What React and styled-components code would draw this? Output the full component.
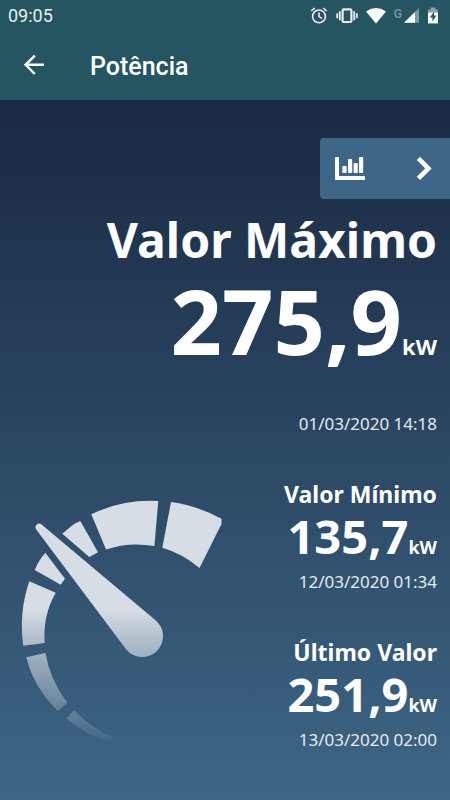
import React from "react";
import styled, { createGlobalStyle } from "styled-components";

const GlobalStyle = createGlobalStyle`
    * {
        box-sizing: border-box;
    }

    body {
        margin: 0;
        background-color: #3d6686;
    }
`;

const Page = styled.div`
    min-height: 100vh;
    display: flex;
    flex-direction: column;
    color: #fff;
    font-family: "Noto Sans", sans-serif;
`;

const Header = styled.header`
    background-color: #265562;
    font-family: Roboto, sans-serif;
`;

const StatusBar = styled.div`
    display: flex;
    align-items: center;
    justify-content: space-between;
    height: 32px;
    padding: 0 11px 0 8px;
    color: #e9eef0;
    font-size: 18px;
    line-height: 24px;
`;

const StatusIcons = styled.div`
    display: flex;
    align-items: center;
    gap: 8px;

    svg {
        display: block;
    }
`;

const AppBar = styled.div`
    display: flex;
    align-items: center;
    gap: 44px;
    height: 68px;
    padding: 0 22px;
`;

const BackButton = styled.button`
    width: 24px;
    height: 24px;
    padding: 0;
    border: none;
    background: none;
    color: inherit;
    cursor: pointer;

    svg {
        display: block;
    }
`;

const PageTitle = styled.h1`
    margin: 0;
    padding-top: 2px;
    font-size: 25px;
    line-height: 34px;
    font-weight: 500;
`;

const Content = styled.main`
    flex: 1;
    display: flex;
    flex-direction: column;
    padding: 38px 0 40px;
    background: linear-gradient(#192941, #3d6686);
`;

const ChartButton = styled.button`
    align-self: flex-end;
    display: flex;
    align-items: center;
    justify-content: space-between;
    width: 130px;
    height: 61px;
    margin-bottom: 11px;
    padding: 0 18px 0 14px;
    border: none;
    border-radius: 4px 0 0 4px;
    background-color: #3e6787;
    color: inherit;
    cursor: pointer;
`;

const Details = styled.div`
    display: flex;
    justify-content: space-between;
    margin-top: 43px;
    padding-left: 10px;
`;

const GaugeDrawing = styled.svg`
    flex: none;
    width: 220px;
    height: 260px;
    margin-top: 10px;
`;

const ReadingList = styled.div`
    display: flex;
    flex-direction: column;
    gap: 43px;
`;

const ReadingBox = styled.section`
    display: flex;
    flex-direction: column;
    align-items: flex-end;
    padding-right: 13px;
`;

const ReadingTitle = styled.h2`
    margin: 0;
    font-size: ${props => props.$large ? "48px" : "23px"};
    line-height: ${props => props.$large ? "60px" : "30px"};
    font-weight: 700;
    white-space: nowrap;
`;

const ReadingValue = styled.p`
    display: flex;
    align-items: baseline;
    margin: ${props => props.$large ? "0" : "3px 0 0"};
    font-size: ${props => props.$large ? "90px" : "47px"};
    line-height: ${props => props.$large ? "100px" : "48px"};
    font-weight: 700;
`;

const Unit = styled.span`
    font-size: ${props => props.$large ? "22px" : "18px"};
    line-height: 24px;
`;

const ReadingDate = styled.time`
    margin-top: ${props => props.$large ? "42px" : "10px"};
    color: #e6ebef;
    font-size: 17px;
    line-height: 24px;
    white-space: nowrap;
`;

const AlarmIcon = () => (
    <svg width="18" height="18" viewBox="0 0 18 18" fill="none" stroke="currentColor" strokeWidth="1.6">
        <circle cx="9" cy="9.4" r="6.4" />
        <path d="M9 5.4v4.2l3 1.8M1.2 4l3.6-3M16.8 4l-3.6-3" />
    </svg>
);

const VibrateIcon = () => (
    <svg width="22" height="16" viewBox="0 0 22 16" fill="none" stroke="currentColor" strokeWidth="1.8">
        <rect x="6.6" y="1.4" width="8.8" height="12.6" rx="1" strokeWidth="2.2" />
        <path d="M3.8 3.2v9M1.2 5.2v5M18.2 3.2v9M20.8 5.2v5" />
    </svg>
);

const WifiIcon = () => (
    <svg width="20" height="16" viewBox="0 0 20 16" fill="#fff">
        <path d="M0 3.4Q10 -3.4 20 3.4L10 15.4Z" />
    </svg>
);

const NetworkType = styled.span`
    align-self: flex-start;
    margin-right: -6px;
    color: #789ba4;
    font-size: 12px;
    line-height: 14px;
    font-weight: 500;
`;

const SignalIcon = () => (
    <svg width="15" height="16" viewBox="0 0 15 16">
        <path d="M15 0v14.8H0Z" fill="#7d99a1" />
        <path d="M11 3.9V14.8H0Z" fill="#fff" />
    </svg>
);

const BatteryIcon = () => (
    <svg width="12" height="18" viewBox="0 0 12 18">
        <path d="M1 2.4h2.8V.6h4.4v1.8H11v4H1Z" fill="#8aa3aa" />
        <path d="M1 5.6h10v10.8H1Z" fill="#fff" />
        <path d="M7 4.8 2.8 10.6H5.4v4L9.4 8.6H7Z" fill="#265562" />
    </svg>
);

const BackIcon = () => (
    <svg width="24" height="24" viewBox="0 0 24 24" fill="none" stroke="currentColor" strokeWidth="2.4">
        <path d="M22 10.8H4M12.8 1.6 3.6 10.8l9.2 9.2" />
    </svg>
);

const ChartIcon = () => (
    <svg width="32" height="26" viewBox="0 0 32 26" fill="currentColor">
        <rect x="1" y="1" width="4" height="23" rx="1" />
        <rect x="1" y="20" width="30" height="4" rx="1" />
        <rect x="8.4" y="10" width="4.2" height="7" rx="1" />
        <rect x="14" y="3" width="4.2" height="14" rx="1" />
        <rect x="19.6" y="7" width="4.2" height="10" rx="1" />
        <rect x="25" y="1" width="4.2" height="16" rx="1" />
    </svg>
);

const ChevronIcon = () => (
    <svg width="16" height="26" viewBox="0 0 16 26" fill="none" stroke="currentColor" strokeWidth="4.6">
        <path d="M2.4 2.4 12.4 12.4l-10 10" />
    </svg>
);

const Gauge = () => (
    <GaugeDrawing viewBox="0 0 220 260" aria-hidden="true">
        <defs>
            <linearGradient id="gaugeFade" gradientUnits="userSpaceOnUse" x1="0" y1="0" x2="0" y2="260">
                <stop offset="0" stopColor="#d6dde4" />
                <stop offset="0.46" stopColor="#d6dde4" />
                <stop offset="1" stopColor="#d6dde4" stopOpacity="0" />
            </linearGradient>
        </defs>
        <g fill="url(#gaugeFade)">
            {/* dial */}
            <path d="M161 13Q187 16.5 211.5 29.8V35L189.5 79Q172.5 64.5 152.3 58.7Z" />
            <path d="M81.3 25.3Q113 10 148.3 12L144.4 57Q119 52.5 96 60.5Z" />
            <path d="M52.3 44.7 60 38.2Q65 34 70.3 32L88 63.3 79.3 68Z" />
            <path d="M35.3 63.7 55 89.7 50.7 95.7 24.7 81Q28.5 71.5 35.3 63.7Z" />
            <path d="M19.3 92.3 45.7 103.7Q32.5 127 34.7 154L13.3 156.7Q8.5 124 19.3 92.3Z" />
            <path d="M16.3 168.3 35.5 164Q39.5 190 57.3 213.5L47.7 222Q23.5 198 16.3 168.3Z" />
            <path d="M64.3 221.3Q81 239 103.5 248.5L100.5 253Q75 246 56.3 229.3Z" />
            {/* needle */}
            <path d="M26 40.3A3.8 3.8 0 0 1 31 35L145.5 131.2A20.8 20.8 0 1 1 115.3 159.3Z" />
        </g>
    </GaugeDrawing>
);

const Reading = ({ title, value, unit, date, large }) => (
    <ReadingBox>
        <ReadingTitle $large={large}>{title}</ReadingTitle>
        <ReadingValue $large={large}>
            {value}
            <Unit $large={large}>{unit}</Unit>
        </ReadingValue>
        <ReadingDate $large={large}>{date}</ReadingDate>
    </ReadingBox>
);

const App = () => {
    return (
        <Page>
            <GlobalStyle />
            <Header>
                <StatusBar>
                    <span>09:05</span>
                    <StatusIcons>
                        <AlarmIcon />
                        <VibrateIcon />
                        <WifiIcon />
                        <NetworkType>G</NetworkType>
                        <SignalIcon />
                        <BatteryIcon />
                    </StatusIcons>
                </StatusBar>
                <AppBar>
                    <BackButton type="button" aria-label="Voltar">
                        <BackIcon />
                    </BackButton>
                    <PageTitle>Potência</PageTitle>
                </AppBar>
            </Header>
            <Content>
                <ChartButton type="button" aria-label="Ver gráfico">
                    <ChartIcon />
                    <ChevronIcon />
                </ChartButton>
                <Reading large title="Valor Máximo" value="275,9" unit="kW" date="01/03/2020 14:18" />
                <Details>
                    <Gauge />
                    <ReadingList>
                        <Reading title="Valor Mínimo" value="135,7" unit="kW" date="12/03/2020 01:34" />
                        <Reading title="Último Valor" value="251,9" unit="kW" date="13/03/2020 02:00" />
                    </ReadingList>
                </Details>
            </Content>
        </Page>
    );
}

export default App;
